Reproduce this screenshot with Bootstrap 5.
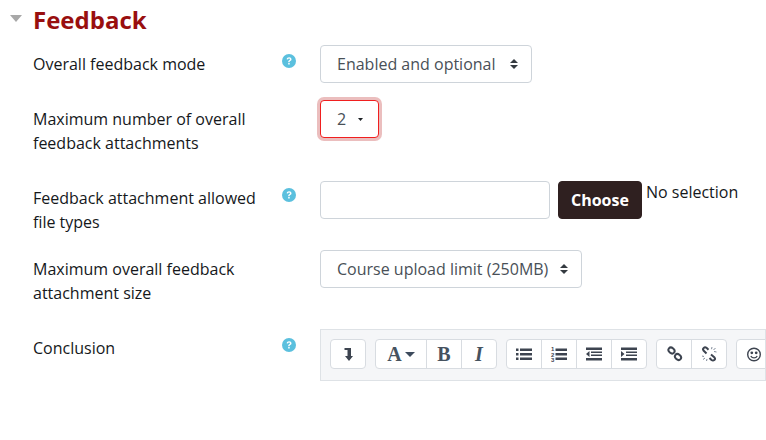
<!DOCTYPE html>
<html lang="en">
<head>
  <meta charset="UTF-8" />
  <title>Feedback settings</title>
  <link href="https://cdn.jsdelivr.net/npm/bootstrap@5.3.0/dist/css/bootstrap.min.css" rel="stylesheet">
  <style>
    body {
      font-family: "Open Sans", sans-serif;
      font-size: 16px;
      color: #15181b;
      background: #fff;
      overflow: hidden;
    }
    .page-wrap { padding: 3px 0 0 10px; }
    .section-title { gap: 11px; height: 33px; }
    .section-title h3 {
      font-family: "Open Sans", sans-serif;
      font-weight: 700;
      font-size: 24px;
      line-height: 33px;
      color: #990f0f;
      margin: 0;
    }
    .collapse-caret { width: 12px; height: 7px; fill: #a8a8a8; margin-top: -2px; }
    .setting-row { display: flex; padding-left: 23px; }
    .setting-label { width: 249px; line-height: 24px; flex: none; padding-right: 20px; }
    .help-slot { width: 38px; flex: none; }
    .help-icon { width: 14px; height: 14px; display: block; }
    .mode-row { margin-top: 9px; height: 55px; }
    .mode-row .setting-label { padding-top: 7px; }
    .mode-row .help-icon { margin-top: 9px; }
    .attach-row { height: 81px; }
    .attach-row .setting-label { padding-top: 7px; }
    .types-row { height: 69px; }
    .types-row .setting-label { padding-top: 5px; }
    .types-row .help-icon { margin-top: 7px; }
    .size-row { height: 79px; }
    .size-row .setting-label { padding-top: 7px; }
    .conclusion-row .setting-label { padding-top: 7px; }
    .conclusion-row .help-icon { margin-top: 9px; }
    .form-select.moodle-select, .form-control.moodle-input {
      height: 38px;
      font-family: "Open Sans", sans-serif;
      font-size: 16px;
      color: #495057;
      border-color: #ced4da;
      border-radius: 4px;
    }
    .form-select.moodle-select {
      padding: 0 0 0 16px;
      background-position: right 13px center;
      background-size: 8px 10px;
      background-image: url("data:image/svg+xml,%3csvg xmlns='http://www.w3.org/2000/svg' viewBox='0 0 8 10'%3e%3cpath fill='%23343a40' d='M4 0l4 4H0zM4 10L0 6h8z'/%3e%3c/svg%3e");
    }
    .select-mode { width: 212px; }
    .select-size { width: 262px; }
    .form-select.select-count {
      width: 59px;
      border-color: #f01f1f;
      box-shadow: 0 0 0 3px rgba(190, 40, 40, .3);
      background-position: right 15px center;
      background-size: 5px 3px;
      background-image: url("data:image/svg+xml,%3csvg xmlns='http://www.w3.org/2000/svg' viewBox='0 0 5 3'%3e%3cpath fill='%231d2125' d='M0 0h5L2.500 3z'/%3e%3c/svg%3e");
    }
    .form-control.moodle-input { width: 230px; }
    .btn-choose {
      height: 38px;
      margin-left: 8px;
      padding: 0 12px;
      font-size: 16px;
      font-weight: 700;
      color: #fff;
      background: #2f2020;
      border: 1px solid #2f2020;
      border-radius: 4px;
    }
    .no-selection { margin: -1px 0 0 4px; line-height: 24px; }
    .editor-box {
      width: 446px;
      height: 52px;
      flex: none;
      background: #f5f6f8;
      border: 1px solid #dee2e6;
      padding: 9px 0 0 9px;
      gap: 9px;
      overflow: hidden;
    }
    .tool-group {
      display: flex;
      flex: none;
      height: 30px;
      background: #fff;
      border: 1px solid #d8dce1;
      border-radius: 4px;
    }
    .tool-btn {
      width: 35px;
      display: flex;
      align-items: center;
      justify-content: center;
      border-left: 1px solid #d8dce1;
      color: #3d4b5c;
    }
    .tool-btn:first-child { border-left: 0; width: 34px; }
    .tool-btn.wide { width: 50px; gap: 3px; }
    .tool-btn svg { width: 18px; height: 18px; display: block; }
    .serif-glyph {
      font-family: "Liberation Serif", serif;
      font-size: 20px;
      line-height: 1;
      font-weight: 700;
      color: #46525f;
    }
    .glyph-caret { width: 10px !important; height: 5px !important; fill: #3d4b5c; }
    .list-digit { font-family: "Liberation Sans", sans-serif; font-size: 6px; font-weight: 700; fill: #3d4450; }
  </style>
</head>
<body>
  <div class="page-wrap">
    <div class="section-title d-flex align-items-center">
      <svg class="collapse-caret" viewBox="0 0 12 7"><path d="M0 0h12L6 7z"/></svg>
      <h3>Feedback</h3>
    </div>

    <div class="setting-row mode-row">
      <div class="setting-label">Overall feedback mode</div>
      <div class="help-slot">
        <svg class="help-icon" viewBox="0 0 14 14"><circle cx="7" cy="7" r="7" fill="#5bc0de"/><path d="M4.6 5.3C4.8 3.9 5.8 3.2 7.1 3.2c1.4 0 2.4.8 2.4 2 0 1-.6 1.5-1.3 1.9-.5.3-.6.5-.6 1.1H6.2c0-1 .2-1.5 1-2 .5-.3.8-.5.8-.9 0-.5-.4-.8-.9-.8-.6 0-1 .3-1.1 1zM6.2 9h1.5v1.6H6.2z" fill="#fff"/></svg>
      </div>
      <select class="form-select moodle-select select-mode"><option>Enabled and optional</option></select>
    </div>

    <div class="setting-row attach-row">
      <div class="setting-label">Maximum number of overall feedback attachments</div>
      <div class="help-slot"></div>
      <select class="form-select moodle-select select-count"><option>2</option></select>
    </div>

    <div class="setting-row types-row">
      <div class="setting-label">Feedback attachment allowed file types</div>
      <div class="help-slot">
        <svg class="help-icon" viewBox="0 0 14 14"><circle cx="7" cy="7" r="7" fill="#5bc0de"/><path d="M4.6 5.3C4.8 3.9 5.8 3.2 7.1 3.2c1.4 0 2.4.8 2.4 2 0 1-.6 1.5-1.3 1.9-.5.3-.6.5-.6 1.1H6.2c0-1 .2-1.5 1-2 .5-.3.8-.5.8-.9 0-.5-.4-.8-.9-.8-.6 0-1 .3-1.1 1zM6.2 9h1.5v1.6H6.2z" fill="#fff"/></svg>
      </div>
      <input type="text" class="form-control moodle-input">
      <button type="button" class="btn btn-choose">Choose</button>
      <span class="no-selection">No selection</span>
    </div>

    <div class="setting-row size-row">
      <div class="setting-label">Maximum overall feedback attachment size</div>
      <div class="help-slot"></div>
      <select class="form-select moodle-select select-size"><option>Course upload limit (250MB)</option></select>
    </div>

    <div class="setting-row conclusion-row">
      <div class="setting-label">Conclusion</div>
      <div class="help-slot">
        <svg class="help-icon" viewBox="0 0 14 14"><circle cx="7" cy="7" r="7" fill="#5bc0de"/><path d="M4.6 5.3C4.8 3.9 5.8 3.2 7.1 3.2c1.4 0 2.4.8 2.4 2 0 1-.6 1.5-1.3 1.9-.5.3-.6.5-.6 1.1H6.2c0-1 .2-1.5 1-2 .5-.3.8-.5.8-.9 0-.5-.4-.8-.9-.8-.6 0-1 .3-1.1 1zM6.2 9h1.5v1.6H6.2z" fill="#fff"/></svg>
      </div>
      <div class="editor-box d-flex">
        <div class="tool-group">
          <div class="tool-btn"><svg viewBox="0 0 18 18"><path d="M5.500 3h6.500v8h2l-4 5-4-5h2.500V5H5.500z" fill="#3d4450"/></svg></div>
        </div>
        <div class="tool-group">
          <div class="tool-btn wide"><span class="serif-glyph">A</span><svg class="glyph-caret" viewBox="0 0 10 5"><path d="M0 0h10L5 5z"/></svg></div>
          <div class="tool-btn"><span class="serif-glyph">B</span></div>
          <div class="tool-btn"><span class="serif-glyph fst-italic">I</span></div>
        </div>
        <div class="tool-group">
          <div class="tool-btn"><svg viewBox="0 0 18 18" fill="#3d4450"><path d="M1 3.500h2.500V6H1zM1 8h2.500v2.500H1zM1 12.500h2.500V15H1zM5 3.500h12V6H5zM5 8h12v2.500H5zM5 12.500h12V15H5z"/></svg></div>
          <div class="tool-btn"><svg viewBox="0 0 18 18" fill="#3d4450"><text class="list-digit" x="1" y="6">1</text><text class="list-digit" x="1" y="11.500">2</text><text class="list-digit" x="1" y="17">3</text><path d="M5.500 3.500H17V6H5.500zM5.500 8H17v2.500H5.500zM5.500 12.500H17V15H5.500z"/></svg></div>
          <div class="tool-btn"><svg viewBox="0 0 18 18" fill="#3d4450"><path d="M1 2.500h16V5H1zM6 6.500h11V8H6zM6 9.500h11V11H6zM1 13h16v2.500H1zM4.500 6v6L1 9z"/></svg></div>
          <div class="tool-btn"><svg viewBox="0 0 18 18" fill="#3d4450"><path d="M1 2.500h16V5H1zM6 6.500h11V8H6zM6 9.500h11V11H6zM1 13h16v2.500H1zM1 6v6l3.500-3z"/></svg></div>
        </div>
        <div class="tool-group">
          <div class="tool-btn"><svg viewBox="0 0 18 18" fill="none" stroke="#3d4450" stroke-width="2"><ellipse cx="6.500" cy="5.500" rx="3.300" ry="2.600" transform="rotate(40 6.500 5.500)"/><ellipse cx="13" cy="12" rx="3.300" ry="2.600" transform="rotate(40 13 12)"/></svg></div>
          <div class="tool-btn"><svg viewBox="0 0 18 18" fill="none" stroke="#3d4450" stroke-width="2"><path d="M6.500 8.500 3.500 5.500C2 3.500 4.500 1.500 6.500 2.800L8.500 4.800"/><path d="M11 9.500l3.500 3C16 14.500 13.500 16.500 11.500 15l-2-2"/><path d="M12 2l-.5 2.200M15.500 3l-2 2M16.500 7l-2.500-.5M2 11l2 .5M3 14.500 5 13M6.500 16 7 14" stroke="#7f8a99" stroke-width="1"/></svg></div>
        </div>
        <div class="tool-group">
          <div class="tool-btn"><svg viewBox="0 0 18 18" fill="none" stroke="#3d4450" stroke-width="1.400"><circle cx="9" cy="9.500" r="6.300"/><circle cx="6.800" cy="7.800" r=".7" fill="#3d4450"/><circle cx="11.200" cy="7.800" r=".7" fill="#3d4450"/><path d="M5.800 11c1.500 2.500 5 2.500 6.400 0"/></svg></div>
        </div>
      </div>
    </div>
  </div>
</body>
</html>
